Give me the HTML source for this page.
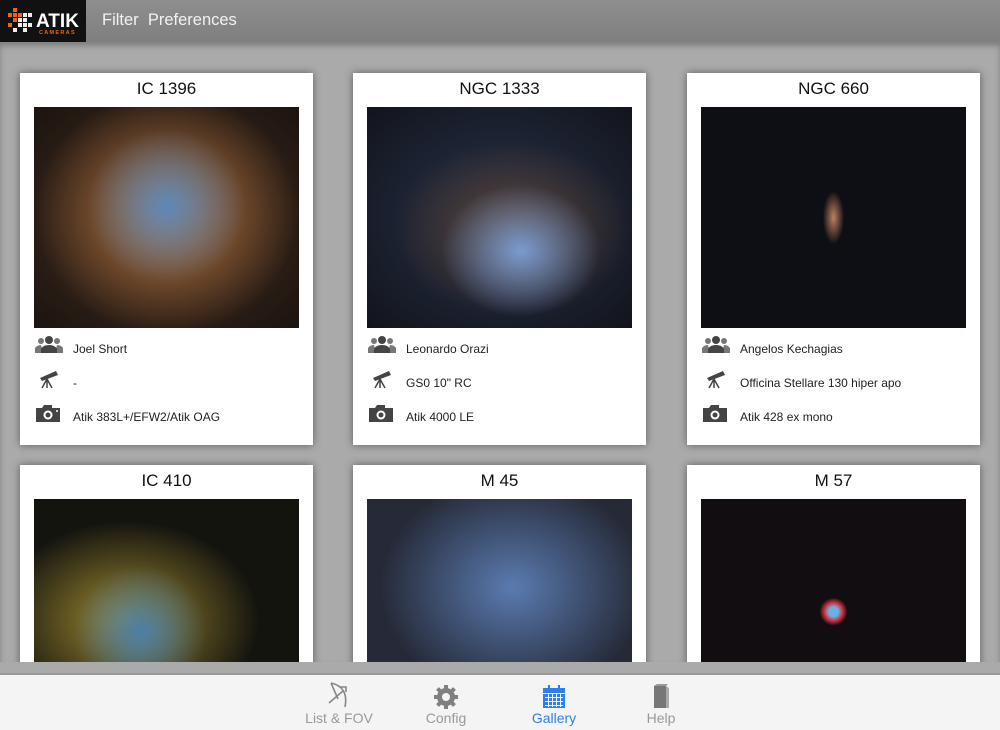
<!DOCTYPE html>
<html><head><style>
*{margin:0;padding:0;box-sizing:border-box}
body{width:1000px;height:730px;overflow:hidden;background:#a8a8a8;font-family:"Liberation Sans",sans-serif;position:relative}
.hdr{position:absolute;left:0;top:0;width:1000px;height:42px;background:linear-gradient(#8e8e8e,#7f7f7f);}
.logo{position:absolute;left:0;top:0;width:86px;height:42px;background:#111}
.nav{position:absolute;left:102px;top:11px;color:#f2f2f2;font-size:16.5px}
.content{position:absolute;left:0;top:42px;width:1000px;height:620px;background:#aaaaaa;box-shadow:inset 0 4px 6px rgba(0,0,0,.25);overflow:hidden}
.gap{position:absolute;left:0;top:662px;width:1000px;height:11px;background:#aaaaaa}
.card{position:absolute;width:293px;height:372px;background:#fff;box-shadow:0 0 8px rgba(0,0,0,.45)}
.card h3{font-weight:normal;font-size:17px;text-align:center;margin-top:6px;color:#111;height:28px}
.img{position:absolute;left:14px;top:34px;width:265px;height:221px}
.row{position:absolute;left:14px;font-size:12px;color:#222;height:20px}
.row svg{position:absolute;left:0;top:0}
.row span{position:absolute;left:39px;top:7px;white-space:nowrap}
.tab{position:absolute;left:0;top:673px;width:1000px;height:57px;background:#f4f4f4;border-top:2px solid #999}
.t{position:absolute;top:35px;font-size:14px;color:#999;text-align:center;width:120px}
</style></head><body>
<div class="hdr"></div>
<div class="logo">
<svg width="86" height="42">
<g fill="#e8651a"><rect x="8" y="13" width="4" height="4"/><rect x="13" y="8" width="4" height="4"/><rect x="13" y="13" width="4" height="4"/><rect x="18" y="13" width="4" height="4"/><rect x="8" y="23" width="4" height="4"/><rect x="13" y="18" width="4" height="4"/></g>
<g fill="#eee"><rect x="18" y="18" width="4" height="4"/><rect x="23" y="13" width="4" height="4"/><rect x="23" y="18" width="4" height="4"/><rect x="18" y="23" width="4" height="4"/><rect x="23" y="23" width="4" height="4"/><rect x="28" y="13" width="4" height="4"/><rect x="28" y="23" width="4" height="4"/><rect x="13" y="28" width="4" height="4"/><rect x="23" y="28" width="4" height="4"/></g>
<text x="36" y="27" fill="#fff" font-family="Liberation Sans" font-weight="bold" font-size="19">ATIK</text>
<text x="39" y="34" fill="#e8651a" font-family="Liberation Sans" font-weight="bold" font-size="5.5" letter-spacing="1.3">CAMERAS</text>
</svg></div>
<div class="nav">Filter&nbsp; Preferences</div>
<div class="content">
<div class="card" style="left:20px;top:31px"><h3>IC 1396</h3>
<div class="img" style="background:radial-gradient(ellipse 30% 35% at 50% 45%,#5d88b8,transparent),radial-gradient(ellipse 50% 55% at 50% 48%,#b3743f,transparent),radial-gradient(ellipse at 50% 50%,#4a3020,#1b1410)"></div>
<div class="row" style="top:262px"><svg width="30" height="20"><circle cx="7" cy="6" r="3" fill="#777"/><circle cx="23" cy="6" r="3" fill="#777"/><path fill="#777" d="M1 18v-5q2-3 6-3l2 8zM29 18v-5q-2-3-6-3l-2 8z"/><circle cx="15" cy="5" r="4" fill="#444"/><path fill="#444" d="M7 18v-4q2-4 8-4q6 0 8 4v4z"/></svg><span>Joel Short</span></div>
<div class="row" style="top:296px"><svg width="30" height="20"><path fill="#444" d="M6 9l16-7 2 4-16 6z"/><path stroke="#444" stroke-width="1.5" d="M13 10l-5 9M13 10v9M13 10l5 9"/></svg><span>-</span></div>
<div class="row" style="top:330px"><svg width="30" height="20"><path fill="#444" d="M2 5h6l2-3h8v3h8v14H2z"/><circle cx="14" cy="12" r="4.5" fill="#fff"/><circle cx="14" cy="12" r="2.5" fill="#444"/><circle cx="23" cy="8" r="1" fill="#fff"/></svg><span>Atik 383L+/EFW2/Atik OAG</span></div>
</div>
<div class="card" style="left:353px;top:31px"><h3>NGC 1333</h3>
<div class="img" style="background:radial-gradient(ellipse 30% 30% at 58% 65%,#7a9bd0,transparent),radial-gradient(ellipse 45% 40% at 55% 55%,#5a4030,transparent),radial-gradient(ellipse at 50% 50%,#27324a,#12141c)"></div>
<div class="row" style="top:262px"><svg width="30" height="20"><circle cx="7" cy="6" r="3" fill="#777"/><circle cx="23" cy="6" r="3" fill="#777"/><path fill="#777" d="M1 18v-5q2-3 6-3l2 8zM29 18v-5q-2-3-6-3l-2 8z"/><circle cx="15" cy="5" r="4" fill="#444"/><path fill="#444" d="M7 18v-4q2-4 8-4q6 0 8 4v4z"/></svg><span>Leonardo Orazi</span></div>
<div class="row" style="top:296px"><svg width="30" height="20"><path fill="#444" d="M6 9l16-7 2 4-16 6z"/><path stroke="#444" stroke-width="1.5" d="M13 10l-5 9M13 10v9M13 10l5 9"/></svg><span>GS0 10" RC</span></div>
<div class="row" style="top:330px"><svg width="30" height="20"><path fill="#444" d="M2 5h6l2-3h8v3h8v14H2z"/><circle cx="14" cy="12" r="4.5" fill="#fff"/><circle cx="14" cy="12" r="2.5" fill="#444"/></svg><span>Atik 4000 LE</span></div>
</div>
<div class="card" style="left:687px;top:31px"><h3>NGC 660</h3>
<div class="img" style="background:radial-gradient(ellipse 4% 12% at 50% 50%,#c08060,transparent),#0e0f14"></div>
<div class="row" style="top:262px"><svg width="30" height="20"><circle cx="7" cy="6" r="3" fill="#777"/><circle cx="23" cy="6" r="3" fill="#777"/><path fill="#777" d="M1 18v-5q2-3 6-3l2 8zM29 18v-5q-2-3-6-3l-2 8z"/><circle cx="15" cy="5" r="4" fill="#444"/><path fill="#444" d="M7 18v-4q2-4 8-4q6 0 8 4v4z"/></svg><span>Angelos Kechagias</span></div>
<div class="row" style="top:296px"><svg width="30" height="20"><path fill="#444" d="M6 9l16-7 2 4-16 6z"/><path stroke="#444" stroke-width="1.5" d="M13 10l-5 9M13 10v9M13 10l5 9"/></svg><span>Officina Stellare 130 hiper apo</span></div>
<div class="row" style="top:330px"><svg width="30" height="20"><path fill="#444" d="M2 5h6l2-3h8v3h8v14H2z"/><circle cx="14" cy="12" r="4.5" fill="#fff"/><circle cx="14" cy="12" r="2.5" fill="#444"/></svg><span>Atik 428 ex mono</span></div>
</div>
<div class="card" style="left:20px;top:423px"><h3>IC 410</h3>
<div class="img" style="background:radial-gradient(ellipse 25% 30% at 40% 60%,#4a7fa8,transparent),radial-gradient(ellipse 50% 45% at 35% 55%,#a08a30,transparent),#14140f"></div></div>
<div class="card" style="left:353px;top:423px"><h3>M 45</h3>
<div class="img" style="background:radial-gradient(ellipse 50% 50% at 55% 40%,#5a7bb0,transparent),#262a38"></div></div>
<div class="card" style="left:687px;top:423px"><h3>M 57</h3>
<div class="img" style="background:radial-gradient(circle 14px at 50% 51%,#6ab0e0 35%,#d03040 65%,transparent),#120d10"></div></div>
</div>
<div class="gap"></div>
<div class="tab">
<svg style="position:absolute;left:326px;top:6px" width="26" height="28"><path d="M5 2q18 4 14 24M5 2l7 16M3 22l14-12M14 6h6v5" stroke="#888" stroke-width="1.6" fill="none"/></svg>
<div class="t" style="left:279px">List &amp; FOV</div>
<svg style="position:absolute;left:433px;top:9px" width="26" height="26"><g fill="#808080"><circle cx="13" cy="13" r="9"/><g stroke="#808080" stroke-width="4"><path d="M13 1v24M1 13h24M4.5 4.5l17 17M21.5 4.5l-17 17"/></g></g><circle cx="13" cy="13" r="4" fill="#f4f4f4"/></svg>
<div class="t" style="left:386px">Config</div>
<svg style="position:absolute;left:542px;top:10px" width="24" height="24"><rect x="1" y="3" width="22" height="20" fill="#2a80f0"/><rect x="6" y="0" width="2" height="5" fill="#2a80f0"/><rect x="16" y="0" width="2" height="5" fill="#2a80f0"/><g stroke="#f4f4f4" stroke-width="1"><path d="M1 8.5h22M3 12.5h18M3 16.5h18M3 20.5h18M6.5 9v13M10.5 9v13M14.5 9v13M18.5 9v13"/></g></svg>
<div class="t" style="left:494px;color:#2a80f0">Gallery</div>
<svg style="position:absolute;left:651px;top:8px" width="20" height="28"><path d="M3 3h12v22H3z" fill="#777"/><path d="M15 3l3 2v20l-3 0z" fill="#aaa"/><path d="M3 3l3-2h11l-2 2z" fill="#999"/></svg>
<div class="t" style="left:601px">Help</div>
</div>
</body></html>
